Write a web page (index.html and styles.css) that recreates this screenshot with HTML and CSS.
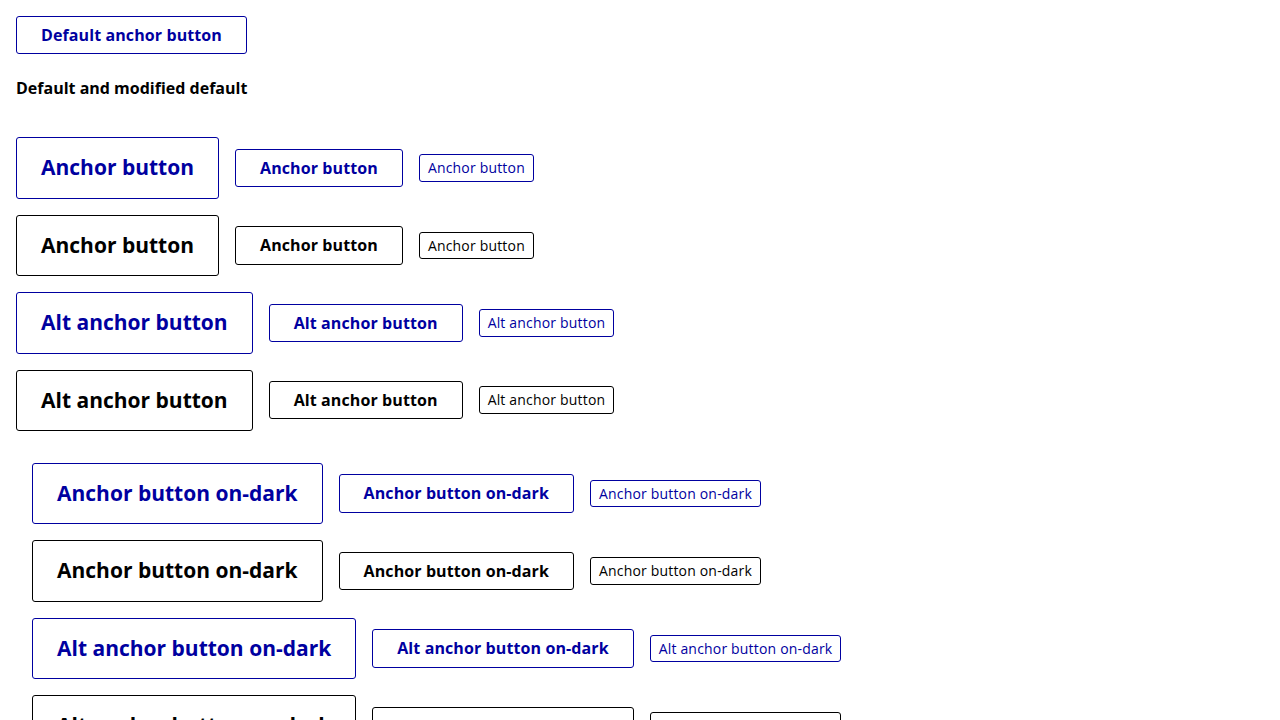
FILE: index.html
```html
<!DOCTYPE html>
<html>
<head>
<meta charset="utf-8">
<link rel="stylesheet" href="styles.css">
</head>
<body>
<div class="page">
  <div class="top"><a class="btn md blue">Default anchor button</a></div>
  <h2 class="heading">Default and modified default</h2>
  <div class="rows">
    <div class="row"><a class="btn lg blue">Anchor button</a><a class="btn md blue">Anchor button</a><a class="btn sm blue">Anchor button</a></div>
    <div class="row"><a class="btn lg black">Anchor button</a><a class="btn md black">Anchor button</a><a class="btn sm black">Anchor button</a></div>
    <div class="row"><a class="btn lg blue">Alt anchor button</a><a class="btn md blue">Alt anchor button</a><a class="btn sm blue">Alt anchor button</a></div>
    <div class="row"><a class="btn lg black">Alt anchor button</a><a class="btn md black">Alt anchor button</a><a class="btn sm black">Alt anchor button</a></div>
  </div>
  <div class="dark">
    <div class="rows">
      <div class="row"><a class="btn lg blue">Anchor button on-dark</a><a class="btn md blue">Anchor button on-dark</a><a class="btn sm blue">Anchor button on-dark</a></div>
      <div class="row"><a class="btn lg black">Anchor button on-dark</a><a class="btn md black">Anchor button on-dark</a><a class="btn sm black">Anchor button on-dark</a></div>
      <div class="row"><a class="btn lg blue">Alt anchor button on-dark</a><a class="btn md blue">Alt anchor button on-dark</a><a class="btn sm blue">Alt anchor button on-dark</a></div>
      <div class="row"><a class="btn lg black">Alt anchor button on-dark</a><a class="btn md black">Alt anchor button on-dark</a><a class="btn sm black">Alt anchor button on-dark</a></div>
    </div>
  </div>
</div>
</body>
</html>
```
FILE: styles.css
```css
html, body { margin: 0; padding: 0; background: #fff; }
body { font-family: "Open Sans", "Noto Sans", sans-serif; color: #000; }
.page { padding: 16px; }
.top { display: flex; }
.heading { font-size: 16px; font-weight: 700; line-height: 22.4px; margin: 22.6px 0 38px; }
.rows { display: flex; flex-direction: column; gap: 16px; }
.row { display: flex; align-items: center; gap: 16px; }
.dark { padding: 16px; margin-top: 16px; }
.btn { display: inline-block; border: 1px solid currentColor; border-radius: 3px; text-decoration: none; white-space: nowrap; cursor: pointer; line-height: 1.4; }
.blue { color: #0000a0; }
.black { color: #000; }
.lg { font-size: 21px; font-weight: 700; padding: 15px 24px; }
.md { font-size: 16px; font-weight: 700; padding: 7px 24px; letter-spacing: 0.1px; }
.sm { font-size: 14px; font-weight: 400; padding: 3px 8px; letter-spacing: 0.18px; }
```
